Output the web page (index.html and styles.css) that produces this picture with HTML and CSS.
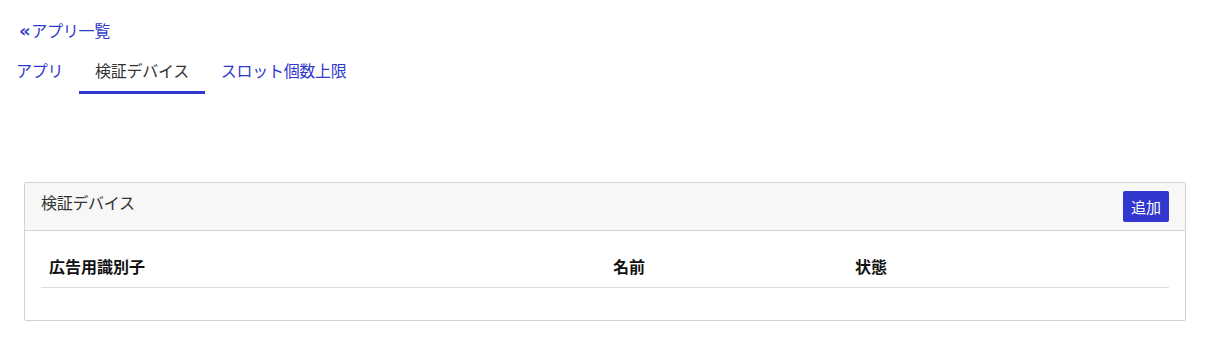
FILE: index.html
```html
<!DOCTYPE html>
<html lang="ja">
<head>
    <meta charset="UTF-8">
    <meta name="viewport" content="width=device-width, initial-scale=1.0">
    <title>検証デバイス</title>
    <link rel="stylesheet" href="styles.css">
</head>
<body>
    <div class="page">
        <a class="back-link" href="#"><span class="back-arrow">«</span>アプリ一覧</a>
        <ul class="tabs">
            <li><a class="tab" href="#">アプリ</a></li>
            <li><a class="tab active" href="#">検証デバイス</a></li>
            <li><a class="tab" href="#">スロット個数上限</a></li>
        </ul>

        <div class="card">
            <div class="card-header">
                <span class="card-title">検証デバイス</span>
                <button class="btn-add">追加</button>
            </div>
            <div class="card-body">
                <table class="device-table">
                    <thead>
                        <tr>
                            <th class="col-id">広告用識別子</th>
                            <th class="col-name">名前</th>
                            <th>状態</th>
                        </tr>
                    </thead>
                    <tbody></tbody>
                </table>
            </div>
        </div>
    </div>
</body>
</html>
```

FILE: styles.css
```css
body {
    margin: 0;
    font-family: "Noto Sans CJK JP", "Noto Sans", sans-serif;
    font-size: 16px;
    line-height: 24px;
    color: #333333;
    background: #ffffff;
}
.page {
    padding-top: 18px;
}
a {
    color: #3138cc;
    text-decoration: none;
}
.back-link {
    display: inline-block;
    margin-left: 19px;
    height: 25px;
    letter-spacing: -0.3px;
}
.back-arrow {
    font-family: "DejaVu Sans", sans-serif;
    font-weight: bold;
    font-size: 18px;
    margin-right: 1px;
}
.tabs {
    list-style: none;
    margin: 8px 0 0 0;
    padding: 0;
    display: flex;
}
.tab {
    display: block;
    padding: 7px 16px 9px;
    letter-spacing: -0.3px;
    border-bottom: 3px solid transparent;
}
.tab.active {
    color: #333333;
    border-bottom-color: #3137cf;
}
.card {
    margin: 88px 20px 0 24px;
    border: 1px solid #d2d2d2;
    border-radius: 2px;
}
.card-header {
    display: flex;
    justify-content: space-between;
    align-items: flex-start;
    padding: 8px 16px;
    background: #f7f7f7;
    border-bottom: 1px solid #d2d2d2;
}
.card-title {
    position: relative;
    top: -1px;
    letter-spacing: -0.3px;
}
.btn-add {
    height: 31px;
    padding: 0 8px;
    border: none;
    border-radius: 2px;
    background: #3137cf;
    color: #ffffff;
    font-family: inherit;
    font-size: 15px;
}
.card-body {
    padding: 16px;
}
.device-table {
    width: 100%;
    border-collapse: collapse;
    margin-bottom: 16px;
}
.device-table th {
    text-align: left;
    font-weight: bold;
    color: #111111;
    padding: 7px 8px 9px;
    border-bottom: 1px solid #dcdde2;
}
.col-id {
    width: 548px;
}
.col-name {
    width: 226px;
}
```
